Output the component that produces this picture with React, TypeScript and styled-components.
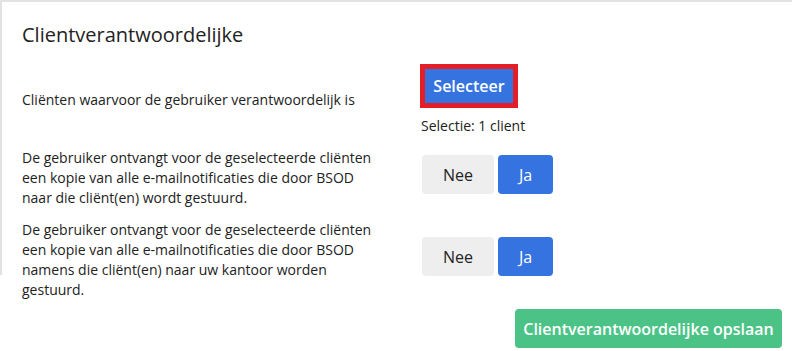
import React, {useState} from "react";
import styled, {createGlobalStyle} from "styled-components";

const GlobalStyle = createGlobalStyle`
    body {
        margin: 0;
        background-color: #ffffff;
        font-family: "Open Sans", "Noto Sans", sans-serif;
        color: #222222;
    }
`

type Choice = 'nee' | 'ja'

const App: React.FC = () => {
    const [copyNotifications, setCopyNotifications] = useState<Choice>('ja')
    const [copyOnBehalf, setCopyOnBehalf] = useState<Choice>('ja')

    return (
        <>
            <GlobalStyle/>
            <Page>
                <Panel>
                    <Title>Clientverantwoordelijke</Title>
                    <Rows>
                        <Row>
                            <Label>Cliënten waarvoor de gebruiker verantwoordelijk is</Label>
                            <Controls>
                                <SelectButton>Selecteer</SelectButton>
                                <SelectionText>Selectie: 1 client</SelectionText>
                            </Controls>
                        </Row>
                        <Row>
                            <Label>
                                De gebruiker ontvangt voor de geselecteerde cliënten een kopie van alle
                                e-mailnotificaties die door BSOD naar die cliënt(en) wordt gestuurd.
                            </Label>
                            <Controls>
                                <Toggle>
                                    <ToggleButton active={copyNotifications === 'nee'} wide onClick={() => setCopyNotifications('nee')}>Nee</ToggleButton>
                                    <ToggleButton active={copyNotifications === 'ja'} onClick={() => setCopyNotifications('ja')}>Ja</ToggleButton>
                                </Toggle>
                            </Controls>
                        </Row>
                        <Row>
                            <Label>
                                De gebruiker ontvangt voor de geselecteerde cliënten een kopie van alle
                                e-mailnotificaties die door BSOD namens die cliënt(en) naar uw kantoor worden gestuurd.
                            </Label>
                            <Controls>
                                <Toggle>
                                    <ToggleButton active={copyOnBehalf === 'nee'} wide onClick={() => setCopyOnBehalf('nee')}>Nee</ToggleButton>
                                    <ToggleButton active={copyOnBehalf === 'ja'} onClick={() => setCopyOnBehalf('ja')}>Ja</ToggleButton>
                                </Toggle>
                            </Controls>
                        </Row>
                    </Rows>
                </Panel>
                <Footer>
                    <SaveButton>Clientverantwoordelijke opslaan</SaveButton>
                </Footer>
            </Page>
        </>
    )
}

export default App

const Page = styled.div`
    width: 792px;
    height: 351px;
    overflow: hidden;
`

const Panel = styled.div`
    position: relative;
    border-top: 2px solid #e2e2e2;
    padding: 19px 0 0 22px;
    &::before {
        content: '';
        position: absolute;
        left: 0;
        top: 0;
        width: 2px;
        height: 273px;
        background-color: #e2e2e2;
    }
`

const Title = styled.h2`
    margin: 0 0 15px 0;
    font-size: 20px;
    line-height: 28px;
    font-weight: 400;
    color: #222222;
`

const Rows = styled.div`
    display: flex;
    flex-direction: column;
    gap: 12px;
`

const Row = styled.div`
    display: grid;
    grid-template-columns: 355px auto;
    column-gap: 44px;
    align-items: center;
`

const Label = styled.div`
    font-size: 14px;
    line-height: 20px;
    color: #222222;
`

const Controls = styled.div`
    display: flex;
    flex-direction: column;
    align-items: flex-start;
`

const SelectButton = styled.button`
    margin: 5px 0 0 4px;
    width: 88px;
    height: 34px;
    padding: 0;
    border: none;
    border-radius: 0;
    outline: 5px solid #e41e26;
    background-color: #3574e0;
    color: #ffffff;
    font-family: "Open Sans", sans-serif;
    font-size: 16px;
    font-weight: 600;
    cursor: pointer;
`

const SelectionText = styled.div`
    margin-top: 13px;
    font-size: 14px;
    line-height: 20px;
`

const Toggle = styled.div`
    display: flex;
    gap: 4px;
    margin: 0 0 7px 1px;
`

const ToggleButton = styled.button<{active: boolean, wide?: boolean}>`
    width: ${(props) => props.wide ? '72px' : '55px'};
    height: 39px;
    padding: 0;
    border: none;
    border-radius: 4px;
    background-color: ${(props) => props.active ? '#3574e0' : '#eeeeee'};
    color: ${(props) => props.active ? '#ffffff' : '#222222'};
    font-family: "Open Sans", sans-serif;
    font-size: 16px;
    font-weight: 400;
    cursor: pointer;
`

const Footer = styled.div`
    display: flex;
    justify-content: flex-end;
    padding: 9px 10px 0 0;
`

const SaveButton = styled.button`
    width: 267px;
    height: 39px;
    padding: 0;
    border: none;
    border-radius: 4px;
    background-color: #4cc386;
    color: #ffffff;
    font-family: "Open Sans", sans-serif;
    font-size: 16px;
    font-weight: 600;
    cursor: pointer;
`
